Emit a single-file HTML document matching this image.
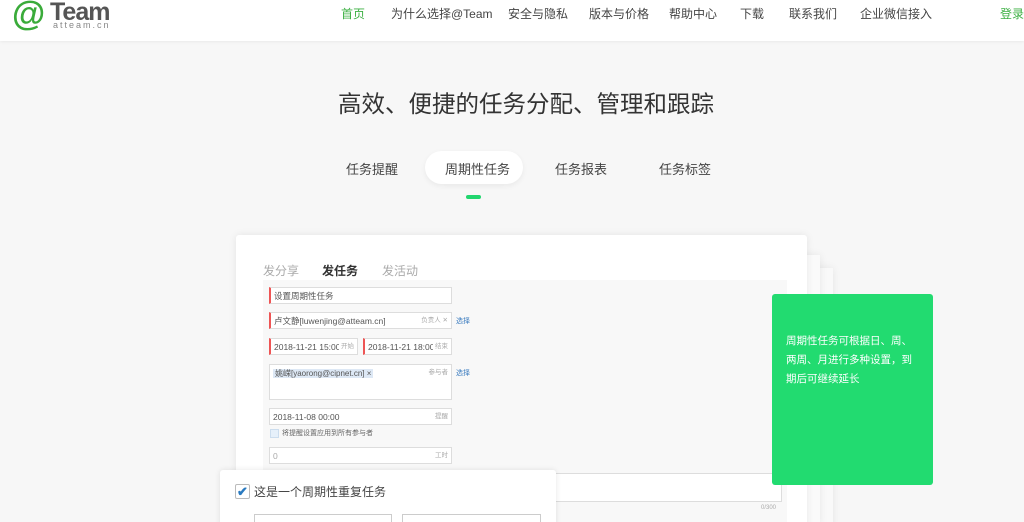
<!DOCTYPE html>
<html><head><meta charset="utf-8"><style>
*{margin:0;padding:0;box-sizing:border-box}
html,body{width:1024px;height:522px;overflow:hidden}
body{background:#f7f7f7;font-family:"Liberation Sans","Noto Sans CJK SC",sans-serif;position:relative;color:#333}
.hd{position:absolute;left:0;top:0;width:1024px;height:41px;background:#fff;box-shadow:0 1px 3px rgba(0,0,0,.06)}
.nav{position:absolute;top:5px;font-size:12px;color:#444;white-space:nowrap}
.a{position:absolute;white-space:nowrap}
.in{position:absolute;background:#fff;border:1px solid #ddd;font-size:8.5px;color:#555;padding-left:3px;line-height:16px;white-space:nowrap;overflow:hidden}
.red{border-left:2px solid #e55}
.ph{position:absolute;right:3px;top:0;font-size:6.5px;color:#aaa;background:#fff;padding-left:2px}
.sel{position:absolute;font-size:7px;color:#3a7bbf}
</style></head><body>
<div class="hd">
 <div class="a" style="left:12px;top:-6px;font-size:34px;font-weight:bold;color:#3aab3a;line-height:40px">@</div>
 <div class="a" style="left:50px;top:-3px;font-size:25px;font-weight:bold;color:#555;line-height:30px;letter-spacing:-1px">Team</div>
 <div class="a" style="left:53px;top:20px;font-size:9px;color:#888;letter-spacing:2px">atteam.cn</div>
 <div class="nav" style="left:341px;color:#3cb043">首页</div>
 <div class="nav" style="left:391px">为什么选择@Team</div>
 <div class="nav" style="left:508px">安全与隐私</div>
 <div class="nav" style="left:589px">版本与价格</div>
 <div class="nav" style="left:669px">帮助中心</div>
 <div class="nav" style="left:740px">下载</div>
 <div class="nav" style="left:789px">联系我们</div>
 <div class="nav" style="left:860px">企业微信接入</div>
 <div class="nav" style="left:1000px;color:#3cb043">登录注</div>
</div>
<div class="a" style="left:338px;top:85px;font-size:23.5px;color:#333">高效、便捷的任务分配、管理和跟踪</div>
<div class="a" style="left:425px;top:151px;width:98px;height:33px;background:#fff;border-radius:17px;box-shadow:0 2px 6px rgba(0,0,0,.06)"></div>
<div class="nav" style="left:346px;top:159px;font-size:13px">任务提醒</div>
<div class="nav" style="left:445px;top:159px;font-size:13px">周期性任务</div>
<div class="nav" style="left:555px;top:159px;font-size:13px">任务报表</div>
<div class="nav" style="left:659px;top:159px;font-size:13px">任务标签</div>
<div class="a" style="left:466px;top:195px;width:15px;height:4px;border-radius:2px;background:#22d66f"></div>
<div class="a" style="left:760px;top:268px;width:73px;height:260px;background:#f9f9f9;box-shadow:0 0 8px rgba(0,0,0,.08)"></div>
<div class="a" style="left:760px;top:255px;width:60px;height:270px;background:#fafafa;box-shadow:0 0 8px rgba(0,0,0,.08)"></div>
<div class="a" style="left:236px;top:235px;width:571px;height:300px;background:#fff;border-radius:3px;box-shadow:0 0 8px rgba(0,0,0,.08)"></div>
<div class="a" style="left:263px;top:262px;font-size:12px;color:#aaa">发分享</div>
<div class="a" style="left:322px;top:262px;font-size:12px;color:#333;font-weight:bold">发任务</div>
<div class="a" style="left:382px;top:262px;font-size:12px;color:#aaa">发活动</div>
<div class="a" style="left:263px;top:280px;width:524px;height:250px;background:#f8f8f8"></div>
<div class="in red" style="left:269px;top:287px;width:183px;height:17px">设置周期性任务</div>
<div class="in red" style="left:269px;top:312px;width:183px;height:17px">卢文静[luwenjing@atteam.cn]<span class="ph">负责人 ✕</span></div>
<div class="sel" style="left:456px;top:316px">选择</div>
<div class="in red" style="left:269px;top:338px;width:89px;height:17px">2018-11-21 15:00<span class="ph">开始</span></div>
<div class="in red" style="left:363px;top:338px;width:89px;height:17px">2018-11-21 18:00<span class="ph">结束</span></div>
<div class="in" style="left:269px;top:364px;width:183px;height:36px"><span style="background:#dde8f5;font-size:8px;padding:0 2px">姚嵘[yaorong@cipnet.cn] ×</span><span class="ph">参与者</span></div>
<div class="sel" style="left:456px;top:368px">选择</div>
<div class="in" style="left:269px;top:408px;width:183px;height:17px">2018-11-08 00:00<span class="ph">提醒</span></div>
<div class="a" style="left:270px;top:429px;width:9px;height:9px;border:1px solid #cde;background:#e6f0fa"></div>
<div class="a" style="left:282px;top:428px;font-size:7px;color:#666">将提醒设置应用到所有参与者</div>
<div class="in" style="left:269px;top:447px;width:183px;height:17px;color:#aaa">0<span class="ph">工时</span></div>
<div class="a" style="left:540px;top:473px;width:242px;height:29px;background:#fff;border:1px solid #ddd"></div>
<div class="a" style="left:761px;top:505px;font-size:6px;color:#aaa">0/300</div>
<div class="a" style="left:220px;top:470px;width:336px;height:60px;background:#fff;border-radius:3px;box-shadow:0 0 6px rgba(0,0,0,.1)"></div>
<div class="a" style="left:235px;top:484px;width:15px;height:15px;border:1px solid #bbb;border-radius:2px;background:#fff;color:#2a7ac0;font-size:13px;line-height:13px;text-align:center;font-weight:bold">✔</div>
<div class="a" style="left:254px;top:483px;font-size:12px;color:#444">这是一个周期性重复任务</div>
<div class="a" style="left:254px;top:514px;width:138px;height:12px;border:1px solid #ccc"></div>
<div class="a" style="left:402px;top:514px;width:139px;height:12px;border:1px solid #ccc"></div>
<div class="a" style="left:772px;top:294px;width:161px;height:191px;background:#22db70;border-radius:3px"></div>
<div class="a" style="left:786px;top:332px;width:135px;font-size:10.5px;line-height:19px;color:#fff;white-space:normal">周期性任务可根据日、周、两周、月进行多种设置，到期后可继续延长</div>
</body></html>
